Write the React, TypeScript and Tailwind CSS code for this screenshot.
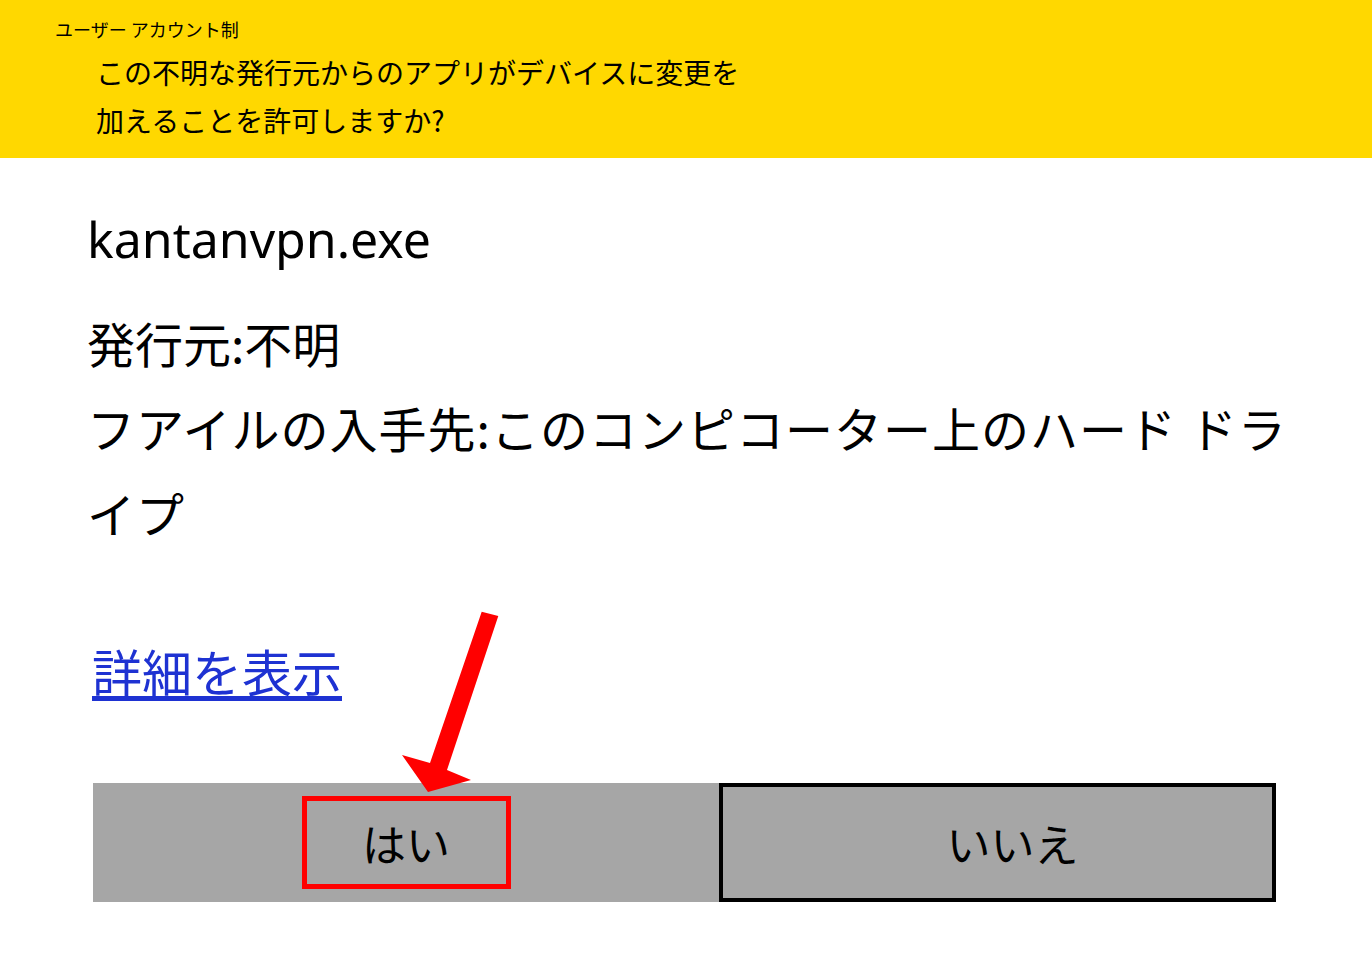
const jp = "font-['Noto_Sans_CJK_JP','Noto_Sans',sans-serif]";

function Arrow() {
  return (
    <svg className="absolute left-0 top-0 pointer-events-none" width="1372" height="968" viewBox="0 0 1372 968">
      <polygon
        points="481.7,611.7 498.3,616 447,770 471,780 428,792 402,755 430,763"
        fill="#ff0000"
      />
    </svg>
  );
}

export default function App() {
  return (
    <div className={`relative w-[1372px] h-[968px] bg-white text-black ${jp}`}>
      {/* ヘッダー */}
      <div className="h-[158px] bg-[#ffd800] pt-[19px]">
        <div className="pl-[55px] text-[18px] leading-[20px]">ユーザー アカウント制</div>
        <div className="mt-[9px] pl-[96px] w-[760px] text-[28px] leading-[48px]">
          この不明な発行元からのアプリがデバイスに変更を加えることを許可しますか?
        </div>
      </div>

      {/* 本文 */}
      <div className="pl-[87px]">
        <div className="mt-[49px] font-['Noto_Sans','Noto_Sans_CJK_JP',sans-serif] text-[50px] leading-[64px]">
          kantanvpn.exe
        </div>
        <div className="mt-[29px] w-[1220px] text-[48px] leading-[85px]">
          <div>発行元:不明</div>
          <div className="tracking-[1px]">フアイルの入手先:このコンピコーター上のハード ドライプ</div>
        </div>
        <div className="mt-[85px] pl-[5px]">
          <a href="#" className="text-[50px] leading-[60px] text-[#1e32d2] underline underline-offset-[4px]">
            詳細を表示
          </a>
        </div>
      </div>

      {/* ボタン */}
      <div className="mt-[83px] ml-[93px] flex h-[119px] w-[1183px]">
        <div className="flex w-[626px] items-center justify-center bg-[#a6a6a6]">
          <div className="flex h-[93px] w-[209px] items-center justify-center border-[5px] border-[#ff0000] text-[44px]">
            はい
          </div>
        </div>
        <div className="flex flex-1 items-center justify-center border-[4px] border-black bg-[#a6a6a6] pl-[30px] text-[44px]">
          いいえ
        </div>
      </div>

      <Arrow />
    </div>
  );
}
